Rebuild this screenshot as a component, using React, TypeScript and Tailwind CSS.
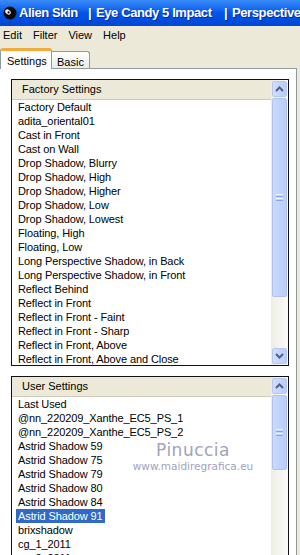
import React from 'react';

const factoryItems = [
  'Factory Default',
  'adita_oriental01',
  'Cast in Front',
  'Cast on Wall',
  'Drop Shadow, Blurry',
  'Drop Shadow, High',
  'Drop Shadow, Higher',
  'Drop Shadow, Low',
  'Drop Shadow, Lowest',
  'Floating, High',
  'Floating, Low',
  'Long Perspective Shadow, in Back',
  'Long Perspective Shadow, in Front',
  'Reflect Behind',
  'Reflect in Front',
  'Reflect in Front - Faint',
  'Reflect in Front - Sharp',
  'Reflect in Front, Above',
  'Reflect in Front, Above and Close',
];

const userItems = [
  'Last Used',
  '@nn_220209_Xanthe_EC5_PS_1',
  '@nn_220209_Xanthe_EC5_PS_2',
  'Astrid Shadow 59',
  'Astrid Shadow 75',
  'Astrid Shadow 79',
  'Astrid Shadow 80',
  'Astrid Shadow 84',
  'Astrid Shadow 91',
  'brixshadow',
  'cg_1_2011',
  'cg_2_2011',
];

function Arrow({ up }: { up: boolean }) {
  return (
    <svg width="9" height="6" viewBox="0 0 9 6">
      <path
        d={up ? 'M1 5 L4.5 1.5 L8 5' : 'M1 1 L4.5 4.5 L8 1'}
        fill="none"
        stroke="#4D6185"
        strokeWidth="2"
      />
    </svg>
  );
}

function ScrollButton({ up }: { up: boolean }) {
  return (
    <div className="h-[16px] mx-[1px] my-[1px] rounded-[2px] border border-[#B4C8F5] bg-gradient-to-r from-[#D2DEFD] to-[#B9CCF9] flex items-center justify-center">
      <Arrow up={up} />
    </div>
  );
}

function Thumb({ height }: { height: number }) {
  return (
    <div
      className="mx-[1px] rounded-[2px] border border-[#AEC3F3] bg-gradient-to-r from-[#CBD9FD] to-[#BACDF9] flex flex-col items-center justify-center gap-[1px]"
      style={{ height }}
    >
      <div className="w-[7px] h-[1px] bg-[#EEF3FE]" />
      <div className="w-[7px] h-[1px] bg-[#8CA4DF]" />
      <div className="w-[7px] h-[1px] bg-[#EEF3FE]" />
      <div className="w-[7px] h-[1px] bg-[#8CA4DF]" />
    </div>
  );
}

function ListBox({
  title,
  items,
  selected,
  thumb,
  className,
}: {
  title: string;
  items: string[];
  selected?: string;
  thumb: number;
  className: string;
}) {
  return (
    <div className={`w-[278px] border-[#111] flex overflow-hidden ${className}`}>
      <div className="w-[259px] flex flex-col overflow-hidden">
        <div className="h-[20px] shrink-0 bg-[#ECE9D8] border-b border-[#CFCBB8] pl-[10px] flex items-center text-[11px]">
          {title}
        </div>
        <div className="pl-[4px] text-[11px] tracking-[-0.1px] leading-[14px]">
          {items.map((it) => (
            <div key={it} className="h-[14px] whitespace-nowrap">
              <span className={it === selected ? 'px-[2px] inline-block bg-[#316AC5] text-white' : 'px-[2px] inline-block'}>
                {it}
              </span>
            </div>
          ))}
        </div>
      </div>
      <div className="w-[17px] flex flex-col bg-gradient-to-r from-[#EEEDE5] to-[#FBFBF8]">
        <ScrollButton up />
        <Thumb height={thumb} />
        <div className="flex-1" />
        <ScrollButton up={false} />
      </div>
    </div>
  );
}

export default function App() {
  return (
    <div className="relative w-[300px] h-[555px] overflow-hidden bg-[#ECE9D8] flex flex-col font-['Liberation_Sans',Arial,sans-serif] text-black">
      {/* Title bar */}
      <div className="h-[26px] shrink-0 bg-gradient-to-b from-[#3A8CF8] via-[#0056EA] to-[#0046D4] flex items-center pl-[3px] whitespace-nowrap overflow-hidden">
        <svg width="14" height="14" viewBox="0 0 14 14" className="shrink-0">
          <circle cx="7" cy="7" r="6.5" fill="#0a0a0a" />
          <ellipse cx="5" cy="6" rx="3" ry="2.2" fill="#f2f2f2" transform="rotate(35 5 6)" />
          <circle cx="5.6" cy="6.4" r="1.1" fill="#0a0a0a" />
        </svg>
        <div className="ml-[2px] text-white font-bold text-[13px] tracking-[-0.4px] [text-shadow:1px_1px_#0A2A9A] flex">
          <span className="w-[69px]">Alien Skin</span>
          <span className="w-[8px]">|</span>
          <span className="w-[128px]">Eye Candy 5 Impact</span>
          <span className="w-[8px]">|</span>
          <span>Perspective</span>
        </div>
      </div>

      {/* Menu bar */}
      <div className="h-[19px] shrink-0 flex items-center pl-[3px] gap-[11px] text-[11px]">
        <span>Edit</span>
        <span>Filter</span>
        <span>View</span>
        <span>Help</span>
      </div>

      {/* Tabs */}
      <div className="h-[23px] shrink-0 flex items-end text-[11px]">
        <div className="relative z-10 h-[21px] -mb-[1px] w-[52px] bg-white border-l border-r border-[#919B9C] border-t-[3px] border-t-[#F5A93A] rounded-t-[3px] pl-[6px] pt-[2px]">
          Settings
        </div>
        <div className="h-[17px] w-[38px] bg-gradient-to-b from-white to-[#ECEBE5] border-t border-r border-[#919B9C] rounded-tr-[3px] pl-[5px] pt-[2px]">
          Basic
        </div>
      </div>

      {/* Panel */}
      <div className="flex-1 w-[297px] bg-white border-t border-r border-[#919B9C] pl-[11px] pt-[10px] flex flex-col">
        <ListBox
          title="Factory Settings"
          items={factoryItems}
          thumb={199}
          className="h-[287px] shrink-0 border"
        />
        <ListBox
          title="User Settings"
          items={userItems}
          selected="Astrid Shadow 91"
          thumb={75}
          className="h-[200px] shrink-0 mt-[10px] border-t border-l border-r"
        />
      </div>

      {/* Watermark */}
      <div className="absolute left-[131px] top-[440px] w-[124px] flex flex-col items-center font-['DejaVu_Sans',sans-serif] text-[#A2A2BC] [text-shadow:0_0_1px_#ffffff]">
        <span className="text-[17px] leading-[20px] tracking-[0.5px]">Pinuccia</span>
        <span className="text-[10.5px] leading-[12px]">www.maidiregrafica.eu</span>
      </div>
    </div>
  );
}
